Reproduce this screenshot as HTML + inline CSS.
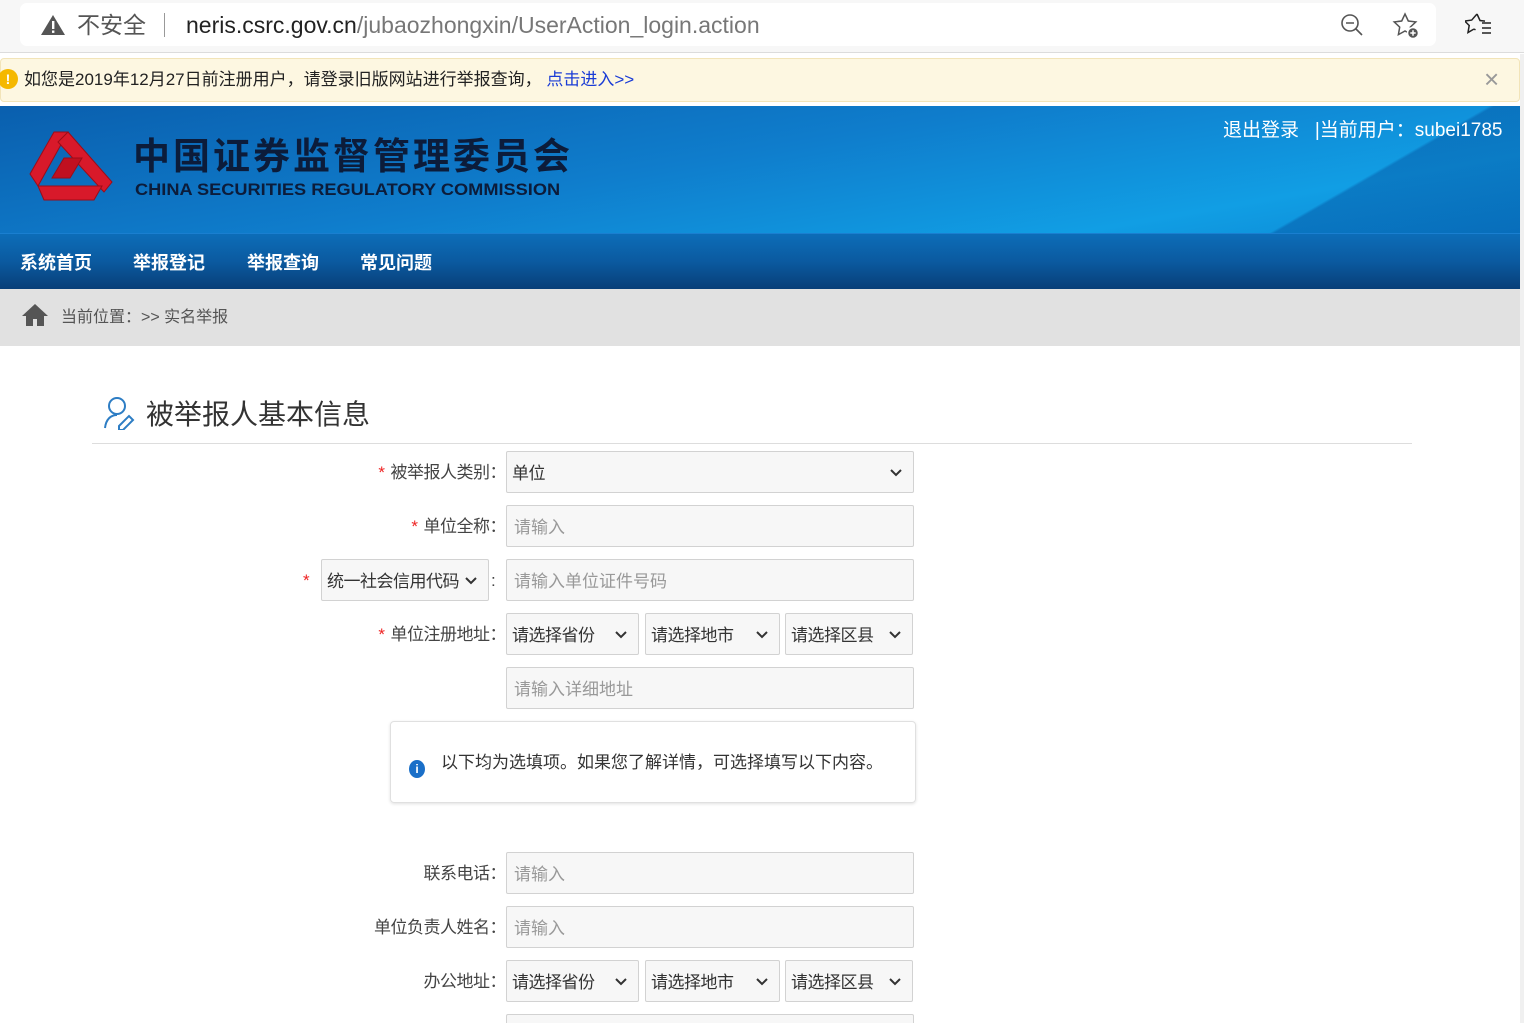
<!DOCTYPE html>
<html style="overflow:hidden"><head><meta charset="utf-8"><style>
*{margin:0;padding:0;box-sizing:border-box}
body{width:1524px;height:1023px;overflow:hidden;background:#fff;font-family:"Liberation Sans","Noto Sans CJK SC",sans-serif;position:relative}
.a{position:absolute}
.inp{position:absolute;left:506px;width:408px;height:42px;background:#f7f7f7;border:1px solid #d2d2d2;border-radius:2px;font-size:17px;color:#999;padding:12px 0 0 7px;line-height:20px}
.sel{position:absolute;height:42px;background:#f7f7f7;border:1px solid #d2d2d2;border-radius:2px;font-size:17px;color:#333;padding:12px 0 0 5px;line-height:20px;letter-spacing:-.5px}
.sel svg{position:absolute;right:11px;top:17px}
.lbl{position:absolute;right:1018px;font-size:17px;color:#444;text-align:right;white-space:nowrap;line-height:20px;letter-spacing:-.5px}
.lbl b{color:#e22;font-weight:normal;margin-right:6px}
.nav{position:absolute;top:249px;font-size:18px;font-weight:bold;color:#fff}
</style></head><body>
<div class="a" style="left:0;top:0;width:1524px;height:53px;background:#f7f7f7;border-bottom:1px solid #dcdcdc"></div>
<div class="a" style="left:20px;top:3px;width:1416px;height:43px;background:#fff;border-radius:7px"></div>
<svg class="a" style="left:40px;top:14px" width="26" height="22" viewBox="0 0 26 22"><path d="M13 1L25 21H1Z" fill="#555"/><rect x="12" y="7" width="2.4" height="8" fill="#fff"/><rect x="12" y="16.5" width="2.4" height="2.4" fill="#fff"/></svg>
<div class="a" style="left:77px;top:10px;font-size:23px;color:#555;line-height:30px">不安全</div>
<div class="a" style="left:164px;top:13px;width:1px;height:24px;background:#999"></div>
<div class="a" style="left:186px;top:10px;font-size:23px;color:#222;line-height:30px">neris.csrc.gov.cn<span style="color:#777">/jubaozhongxin/UserAction_login.action</span></div>
<svg class="a" style="left:1340px;top:13px" width="24" height="24" viewBox="0 0 24 24" fill="none" stroke="#555" stroke-width="1.6"><circle cx="10" cy="10" r="8"/><path d="M6 10h8M16 16l6 6"/></svg>
<svg class="a" style="left:1392px;top:12px" width="30" height="28" viewBox="0 0 30 28" fill="none" stroke="#555" stroke-width="1.5"><path d="M13 2l3.3 7 7.5.9-5.5 5.2 1.3 7.5L13 19l-6.6 3.6 1.3-7.5L2.2 9.9l7.5-.9z"/><circle cx="21" cy="21" r="5.5" fill="#555" stroke="#fff" stroke-width="1.5"/><path d="M21 18.3v5.4M18.3 21h5.4" stroke="#fff"/></svg>
<svg class="a" style="left:1465px;top:12px" width="28" height="26" viewBox="0 0 28 26" fill="none" stroke="#222" stroke-width="1.5"><path d="M12 2l3 6.5 5 .6M9 17l-6 3.5 1.2-7L-0.3 9l7-.9L12 2M9 17l1.5.9"/><path d="M17 11h9M17 16h9M17 21h9"/></svg>
<div class="a" style="left:0;top:58px;width:1520px;height:44px;background:#fdf7e1;border:1px solid #f2e4b8;border-radius:4px"></div>
<div class="a" style="left:-2px;top:69px;width:20px;height:20px;border-radius:50%;background:#f5b800;color:#fff;font-size:14px;font-weight:bold;text-align:center;line-height:20px">!</div>
<div class="a" style="left:24px;top:70px;font-size:17px;color:#222;line-height:20px">如您是2019年12月27日前注册用户，请登录旧版网站进行举报查询，&nbsp;<span style="color:#1a3cd6">点击进入&gt;&gt;</span></div>
<div class="a" style="left:1484px;top:64px;font-size:26px;color:#999;font-weight:300">×</div>
<div class="a" style="left:0;top:106px;width:1520px;height:128px;background:linear-gradient(170deg,#0a5fae 0%,#0f7dcc 45%,#119ee4 80%,#0b88d4 100%)"></div>
<div class="a" style="left:1180px;top:106px;width:340px;height:128px;background:linear-gradient(150deg,rgba(0,0,0,0) 55%,rgba(0,60,140,.35) 56%)"></div>
<svg class="a" style="left:24px;top:130px" width="90" height="76" viewBox="0 0 90 76"><g fill="#d8192a" stroke="#9c0c18" stroke-width="1"><path d="M30 2h14L14 56 6 44z"/><path d="M44 2l44 50-8 10L34 12z"/><path d="M14 56h64l-8 14H20z"/><path d="M40 28h18L46 48H28z" fill="#c01020"/></g></svg>
<div class="a" style="left:133px;top:137px;font-size:37px;line-height:40px;font-weight:bold;color:#0c1c3a;letter-spacing:3px">中国证券监督管理委员会</div>
<div class="a" style="left:135px;top:180px;font-size:17px;line-height:20px;font-weight:bold;color:#0c1c3a;transform:scaleX(1.07);transform-origin:left">CHINA SECURITIES REGULATORY COMMISSION</div>
<div class="a" style="left:1223px;top:119px;font-size:19px;color:#fff;line-height:24px">退出登录&nbsp;&nbsp;&nbsp;|当前用户：subei1785</div>
<div class="a" style="left:0;top:233px;width:1520px;height:56px;background:linear-gradient(#0c6db8,#0b5aa0 50%,#083f78);border-top:1px solid #1a7fd0"></div>
<div class="nav" style="left:20px">系统首页</div><div class="nav" style="left:133px">举报登记</div><div class="nav" style="left:247px">举报查询</div><div class="nav" style="left:360px">常见问题</div>
<div class="a" style="left:0;top:289px;width:1520px;height:57px;background:#e1e1e1"></div>
<svg class="a" style="left:21px;top:303px" width="28" height="24" viewBox="0 0 28 24"><path d="M14 1L1 13h4v10h7v-7h4v7h7V13h4z" fill="#555"/></svg>
<div class="a" style="left:61px;top:308px;font-size:16px;color:#555;line-height:20px">当前位置：&gt;&gt; 实名举报</div>
<div class="a" style="left:1520px;top:54px;width:4px;height:969px;background:#f0f0f0"></div>
<svg class="a" style="left:103px;top:396px" width="34" height="34" viewBox="0 0 34 34" fill="none" stroke="#2d7dc4" stroke-width="2"><circle cx="14" cy="10" r="8"/><path d="M2 32c1-9 6-13 12-13"/><path d="M16 30l10-10 4 4-10 10h-4z"/></svg>
<div class="a" style="left:146px;top:398px;font-size:28px;color:#333;line-height:34px">被举报人基本信息</div>
<div class="a" style="left:92px;top:443px;width:1320px;height:1px;background:#ddd"></div>
<div class="lbl" style="top:463px"><b>*</b>被举报人类别：</div>
<div class="sel" style="left:506px;top:451px;width:408px">单位<svg width="12" height="8"><path d="M1 1l5 5 5-5" fill="none" stroke="#333" stroke-width="2"/></svg></div>
<div class="lbl" style="top:517px"><b>*</b>单位全称：</div>
<div class="inp" style="top:505px">请输入</div>
<div class="a" style="left:303px;top:571px;font-size:17px;color:#e22">*</div>
<div class="sel" style="left:321px;top:559px;width:168px">统一社会信用代码<svg width="12" height="8"><path d="M1 1l5 5 5-5" fill="none" stroke="#333" stroke-width="2"/></svg></div>
<div class="a" style="left:491px;top:571px;font-size:17px;color:#444">:</div>
<div class="inp" style="top:559px">请输入单位证件号码</div>
<div class="lbl" style="top:625px"><b>*</b>单位注册地址：</div>
<div class="sel" style="left:506px;top:613px;width:133px">请选择省份<svg width="12" height="8"><path d="M1 1l5 5 5-5" fill="none" stroke="#333" stroke-width="2"/></svg></div>
<div class="sel" style="left:645px;top:613px;width:135px">请选择地市<svg width="12" height="8"><path d="M1 1l5 5 5-5" fill="none" stroke="#333" stroke-width="2"/></svg></div>
<div class="sel" style="left:785px;top:613px;width:128px">请选择区县<svg width="12" height="8"><path d="M1 1l5 5 5-5" fill="none" stroke="#333" stroke-width="2"/></svg></div>
<div class="inp" style="top:667px">请输入详细地址</div>
<div class="a" style="left:390px;top:721px;width:526px;height:82px;border:1px solid #e0e0e0;border-radius:4px;box-shadow:0 1px 3px rgba(0,0,0,.12)"></div>
<div class="a" style="left:409px;top:760px;width:16px;height:18px;border-radius:50%;background:#1a6fc8;color:#fff;font-size:12px;font-weight:bold;text-align:center;line-height:18px">i</div>
<div class="a" style="left:441px;top:753px;font-size:17px;color:#333;line-height:20px">以下均为选填项。如果您了解详情，可选择填写以下内容。</div>
<div class="lbl" style="top:864px">联系电话：</div>
<div class="inp" style="top:852px">请输入</div>
<div class="lbl" style="top:918px">单位负责人姓名：</div>
<div class="inp" style="top:906px">请输入</div>
<div class="lbl" style="top:972px">办公地址：</div>
<div class="sel" style="left:506px;top:960px;width:133px">请选择省份<svg width="12" height="8"><path d="M1 1l5 5 5-5" fill="none" stroke="#333" stroke-width="2"/></svg></div>
<div class="sel" style="left:645px;top:960px;width:135px">请选择地市<svg width="12" height="8"><path d="M1 1l5 5 5-5" fill="none" stroke="#333" stroke-width="2"/></svg></div>
<div class="sel" style="left:785px;top:960px;width:128px">请选择区县<svg width="12" height="8"><path d="M1 1l5 5 5-5" fill="none" stroke="#333" stroke-width="2"/></svg></div>
<div class="inp" style="top:1014px;height:9px"></div>
</body></html>
